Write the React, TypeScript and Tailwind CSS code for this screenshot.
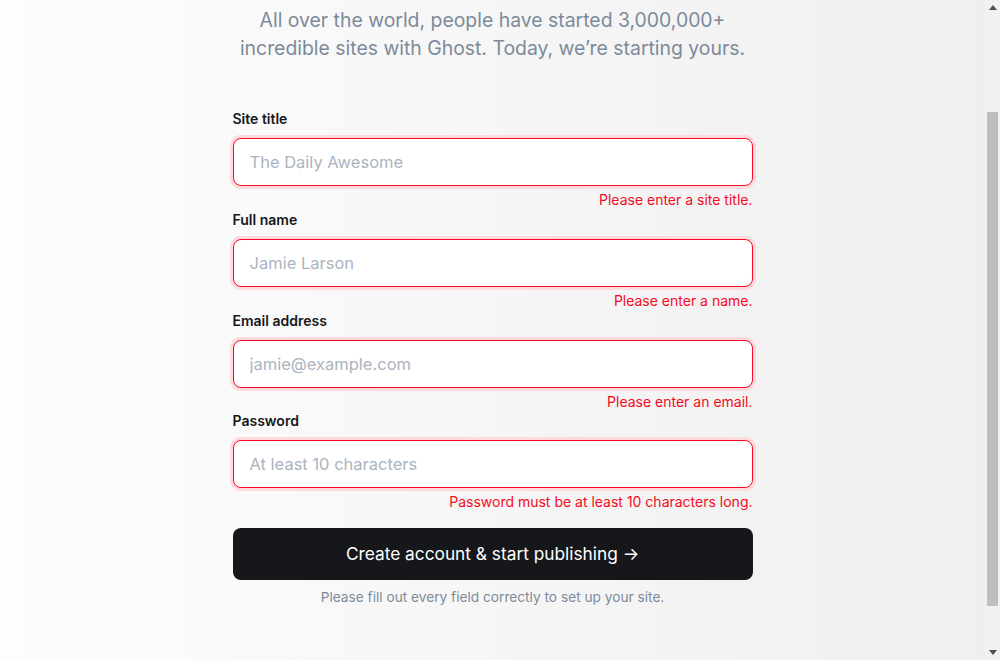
import { useLayoutEffect, useRef } from 'react';
import type { FC } from 'react';

interface FieldProps {
  label: string;
  placeholder: string;
  error: string;
  type?: string;
}

const Field: FC<FieldProps> = ({ label, placeholder, error, type = 'text' }) => (
  <div className="flex flex-col">
    <label className="text-[14px] leading-[20px] font-semibold text-[#15171a] mb-[9px]">{label}</label>
    <input
      type={type}
      placeholder={placeholder}
      className="h-[48px] w-full rounded-[8px] border border-[#f50b23] bg-white px-[16px] text-[16.5px] text-[#15171a] outline-none shadow-[0_0_0_3px_#fcdadd] placeholder:text-[#aab4bf]"
    />
    <p className="mt-[4px] text-right text-[14px] leading-[20px] text-[#f50b23]">{error}</p>
  </div>
);

const ScrollBar: FC = () => (
  <div className="w-[15px] shrink-0 h-full bg-[#f1f1f1] flex flex-col">
    <div className="h-[15px] flex items-center justify-center">
      <svg width="8" height="5" viewBox="0 0 8 5">
        <path d="M4 0 L8 5 L0 5 Z" fill="#505050" />
      </svg>
    </div>
    <div className="flex-1 px-[2px] pt-[97px]">
      <div className="h-[494px] bg-[#bebebe]" />
    </div>
    <div className="h-[15px] flex items-center justify-center">
      <svg width="8" height="5" viewBox="0 0 8 5">
        <path d="M0 0 L8 0 L4 5 Z" fill="#505050" />
      </svg>
    </div>
  </div>
);

export default function App() {
  const scroller = useRef<HTMLDivElement>(null);

  useLayoutEffect(() => {
    if (scroller.current) scroller.current.scrollTop = 130;
  }, []);

  return (
    <div className="h-screen w-full flex overflow-hidden" style={{ fontFamily: 'Inter, "Noto Sans", sans-serif' }}>
      <div ref={scroller} className="flex-1 h-full overflow-hidden">
        <main className="min-h-[842px] w-full bg-gradient-to-r from-[#fdfdfd] via-[#f6f6f6] to-[#efefef] pt-[60px] pb-[107px]">
          <div className="mx-auto w-[520px] flex flex-col">
            <h1 className="text-center text-[40px] leading-[50px] font-bold text-[#15171a] tracking-tight">
              Let’s get started.
            </h1>
            <p className="mt-[26px] mx-[-20px] text-center text-[19.4px] leading-[28px] text-[#7c8b9a]">
              All over the world, people have started 3,000,000+ incredible sites with Ghost. Today, we’re starting yours.
            </p>

            <form className="mt-[47px] flex flex-col" onSubmit={(e) => e.preventDefault()}>
              <Field label="Site title" placeholder="The Daily Awesome" error="Please enter a site title." />
              <Field label="Full name" placeholder="Jamie Larson" error="Please enter a name." />
              <Field label="Email address" placeholder="jamie@example.com" error="Please enter an email." type="email" />
              <div className="-mt-px">
                <Field
                  label="Password"
                  placeholder="At least 10 characters"
                  error="Password must be at least 10 characters long."
                  type="password"
                />
              </div>

              <button
                type="submit"
                className="mt-[16px] h-[52px] w-full rounded-[8px] bg-[#15171a] text-[17.3px] text-white"
              >
                Create account &amp; start publishing →
              </button>
              <p className="mt-[7px] text-center text-[13.7px] leading-[20px] text-[#7c8b9a]">
                Please fill out every field correctly to set up your site.
              </p>
            </form>
          </div>
        </main>
      </div>
      <ScrollBar />
    </div>
  );
}
